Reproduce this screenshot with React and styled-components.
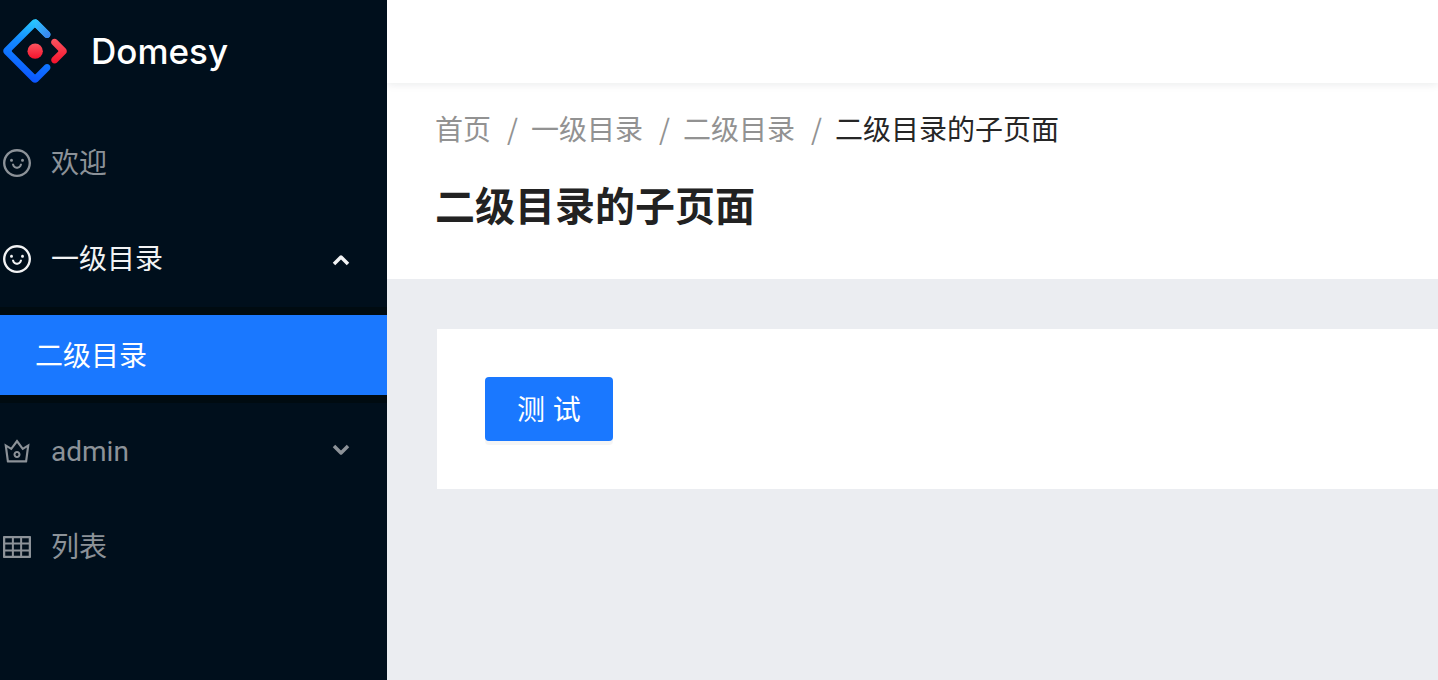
import { useState } from "react";
import styled, { createGlobalStyle } from "styled-components";
import { AiOutlineCrown, AiOutlineSmile, AiOutlineTable } from "react-icons/ai";

const GlobalStyle = createGlobalStyle`
  * {
    box-sizing: border-box;
  }
  body {
    margin: 0;
    background: #ebedf1;
    color: #222;
    font-family: "Liberation Sans", "Noto Sans CJK SC", sans-serif;
    font-size: 28px;
    line-height: 44px;
  }
`;

const Layout = styled.div`
  display: grid;
  grid-template-columns: 387px 1fr;
  min-height: 100vh;
`;

const Sider = styled.aside`
  background: #000f1c;
  color: #fff;
`;

const Brand = styled.a`
  display: flex;
  align-items: center;
  gap: 24px;
  height: 102px;
  padding-left: 3px;
  color: #fff;
  text-decoration: none;
`;

const BrandName = styled.span`
  font-family: Inter, sans-serif;
  font-size: 35px;
  font-weight: 500;
`;

const MenuList = styled.ul`
  list-style: none;
  margin: 0;
  padding: 13px 0 0;
`;

const MenuItem = styled.li`
  display: flow-root;
`;

const MenuRow = styled.button`
  display: flex;
  align-items: center;
  gap: 18px;
  width: 100%;
  height: 80px;
  margin: 8px 0;
  padding: 0 36px 0 1px;
  border: none;
  background: none;
  color: ${(props) => (props.$open ? "#f2f3f4" : "#8c9298")};
  font-family: Roboto, "Noto Sans CJK SC", sans-serif;
  font-size: 28px;
  line-height: 44px;
  text-align: left;
  text-decoration: none;
  cursor: pointer;

  &:hover {
    color: #fff;
  }
`;

const MenuText = styled.span`
  flex: 1;
  padding-top: 2px;
`;

const SubMenu = styled.ul`
  list-style: none;
  margin: 0;
  padding: 8px 0;
  background: #000b11;
`;

const SubMenuLink = styled.a`
  display: flex;
  align-items: center;
  height: 80px;
  padding: 4px 0 0 35px;
  background: #1a78ff;
  color: #fff;
  text-decoration: none;
`;

const Main = styled.div`
  display: flex;
  flex-direction: column;
  min-width: 0;
`;

const TopBar = styled.header`
  height: 83px;
  background: #fff;
  box-shadow: 0 2px 8px rgba(0, 21, 41, 0.08);
  position: relative;
  z-index: 1;
`;

const PageHeader = styled.div`
  height: 196px;
  padding: 23px 48px;
  background: #fff;
`;

const Breadcrumb = styled.ol`
  display: flex;
  list-style: none;
  margin: 0;
  padding: 0;
  font-family: "Noto Sans CJK SC", sans-serif;
`;

const Crumb = styled.li`
  color: #929292;

  & + &::before {
    content: "/";
    margin: 0 13px 0 16px;
  }
  a {
    color: inherit;
    text-decoration: none;
  }
  &[aria-current] {
    color: #262626;
  }
  &[aria-current]::before {
    color: #929292;
  }
`;

const PageTitle = styled.h1`
  margin: 26px 0 0;
  font-size: 40px;
  font-weight: 600;
  line-height: 62px;
`;

const Content = styled.main`
  padding: 50px 0 50px 50px;
`;

const Card = styled.section`
  padding: 48px;
  background: #fff;
`;

const PrimaryButton = styled.button`
  display: block;
  height: 64px;
  padding: 4px 32px 0;
  border: none;
  border-radius: 4px;
  background: #1a78ff;
  color: #fff;
  box-shadow: 0 4px 0 rgba(0, 0, 0, 0.04);
  font: inherit;
  cursor: pointer;
`;

function Logo() {
  return (
    <svg width="64" height="64" viewBox="0 0 200 200" aria-hidden="true">
      <defs>
        <linearGradient id="blue" x1="0.7" y1="0" x2="0.45" y2="1">
          <stop offset="0" stopColor="#29cdff" />
          <stop offset="0.38" stopColor="#148eff" />
          <stop offset="1" stopColor="#0a50ff" />
        </linearGradient>
        <linearGradient id="arm" gradientUnits="userSpaceOnUse" x1="100" y1="12" x2="140" y2="50">
          <stop offset="0" stopColor="#2ec0ff" />
          <stop offset="1" stopColor="#3a88ee" />
        </linearGradient>
        <linearGradient id="red" x1="0.5" y1="0" x2="0.5" y2="1">
          <stop offset="0" stopColor="#fa5560" />
          <stop offset="1" stopColor="#f5122c" />
        </linearGradient>
      </defs>
      <path
        fill="url(#blue)"
        d="M91.6 4.2 4.2 91.5c-4.7 4.7-4.7 12.3 0 17l87.4 87.3c4.7 4.7 12.3 4.7 17 0l36.6-36.6c4.2-4.2 4.2-11 0-15.2s-11-4.2-15.2 0l-27.8 27.7c-1.2 1.2-2.9 1.2-4.1 0L28.3 102c-1.2-1.2-1.2-2.9 0-4.1l69.8-69.8c1.2-1.1 2.9-1.1 4.1 0L130 55.9c4.2 4.2 11 4.2 15.2 0s4.2-11 0-15.2L108.6 4.1c-4.7-4.6-12.3-4.6-17 .1Z"
      />
      <path
        fill="url(#arm)"
        d="M100 27.3c.8 0 1.5.2 2.2.8L130 55.9c4.2 4.2 11 4.2 15.2 0s4.2-11 0-15.2L108.6 4.1C106 1.6 103 .6 100 .6Z"
      />
      <path
        fill="url(#red)"
        d="M153.7 135.9c4.2 4.2 11 4.2 15.2 0l27-27c4.7-4.7 4.7-12.3 0-17l-27.2-27.2c-4.3-4.2-11.1-4.2-15.3 0s-4.2 11 0 15.2l18.5 18.5c1.1 1.1 1.1 2.9 0 4.1l-18.2 18.1c-4.2 4.2-4.2 11.1 0 15.3Z"
      />
      <circle cx="100.5" cy="100.4" r="24" fill="url(#red)" />
    </svg>
  );
}

function Arrow({ up }) {
  return (
    <svg width="20" height="20" viewBox="0 0 20 20" aria-hidden="true">
      <path
        d={up ? "M3 15 10 8l7 7" : "M3 5l7 7 7-7"}
        fill="none"
        stroke="currentColor"
        strokeWidth="3.5"
        strokeLinejoin="round"
      />
    </svg>
  );
}

function App() {
  const [open, setOpen] = useState(true);

  return (
    <Layout>
      <GlobalStyle />
      <Sider>
        <Brand href="#home">
          <Logo />
          <BrandName>Domesy</BrandName>
        </Brand>
        <nav>
          <MenuList>
            <MenuItem>
              <MenuRow as="a" href="#welcome">
                <AiOutlineSmile size={32} />
                <MenuText>欢迎</MenuText>
              </MenuRow>
            </MenuItem>
            <MenuItem>
              <MenuRow $open={open} aria-expanded={open} onClick={() => setOpen(!open)}>
                <AiOutlineSmile size={32} />
                <MenuText>一级目录</MenuText>
                <Arrow up={open} />
              </MenuRow>
              {open && (
                <SubMenu>
                  <li>
                    <SubMenuLink href="#second">二级目录</SubMenuLink>
                  </li>
                </SubMenu>
              )}
            </MenuItem>
            <MenuItem>
              <MenuRow aria-expanded={false}>
                <AiOutlineCrown size={32} />
                <MenuText>admin</MenuText>
                <Arrow />
              </MenuRow>
            </MenuItem>
            <MenuItem>
              <MenuRow as="a" href="#list">
                <AiOutlineTable size={32} />
                <MenuText>列表</MenuText>
              </MenuRow>
            </MenuItem>
          </MenuList>
        </nav>
      </Sider>

      <Main>
        <TopBar />
        <PageHeader>
          <Breadcrumb>
            <Crumb>
              <a href="#home">首页</a>
            </Crumb>
            <Crumb>
              <a href="#first">一级目录</a>
            </Crumb>
            <Crumb>
              <a href="#second">二级目录</a>
            </Crumb>
            <Crumb aria-current="page">二级目录的子页面</Crumb>
          </Breadcrumb>
          <PageTitle>二级目录的子页面</PageTitle>
        </PageHeader>
        <Content>
          <Card>
            <PrimaryButton>测 试</PrimaryButton>
          </Card>
        </Content>
      </Main>
    </Layout>
  );
}

export default App;
